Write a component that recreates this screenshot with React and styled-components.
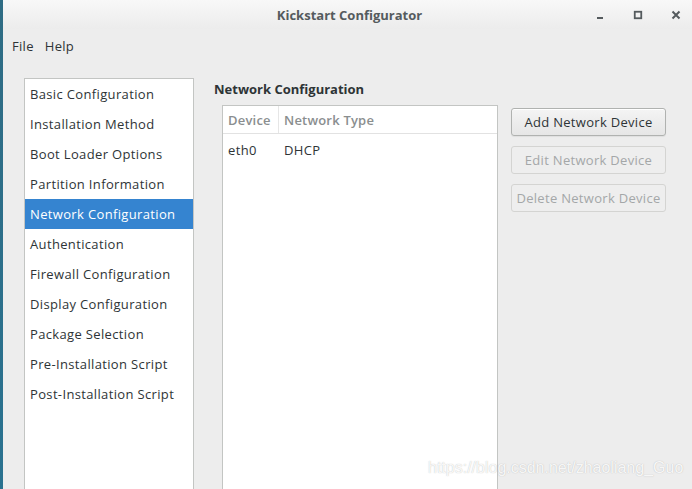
import React, { useState } from 'react';
import styled, { createGlobalStyle } from 'styled-components';

const GlobalStyle = createGlobalStyle`
  html, body {
    margin: 0;
    padding: 0;
    width: 692px;
    height: 489px;
    overflow: hidden;
    background: #ededed;
  }
  body {
    font-family: "Open Sans", "Noto Sans", "DejaVu Sans", sans-serif;
    color: #2e3436;
  }
`;

const Desktop = styled.div`
  display: flex;
  width: 692px;
  height: 489px;
  position: relative;
  overflow: hidden;
`;

const DesktopEdge = styled.div`
  width: 3px;
  flex-shrink: 0;
  background: linear-gradient(#2f6c84, #2a7290);
`;

const Window = styled.div`
  flex: 1;
  display: flex;
  flex-direction: column;
  background: #ededed;
  min-width: 0;
`;

const TitleBar = styled.div`
  height: 29px;
  flex-shrink: 0;
  display: flex;
  align-items: center;
  position: relative;
  background: linear-gradient(#f8f8f8, #ececec);
`;

const Title = styled.div`
  flex: 1;
  text-align: center;
  font-size: 13px;
  font-weight: 700;
  color: #555b5e;
  padding-left: 4px;
`;

const WindowControls = styled.div`
  position: absolute;
  right: -3px;
  top: 0;
  height: 29px;
  display: flex;
  align-items: center;
`;

const ControlButton = styled.div`
  width: 38px;
  height: 29px;
  display: flex;
  align-items: center;
  justify-content: center;
  color: #555b5e;
`;

const MenuBar = styled.div`
  height: 33px;
  display: flex;
  align-items: center;
  padding-left: 8px;
  flex-shrink: 0;
`;

const MenuItem = styled.span`
  font-size: 13px;
  letter-spacing: 0.3px;
  padding: 0 10px 0 1px;
  color: #2e3436;
`;

const Body = styled.div`
  flex: 1;
  display: flex;
  padding: 16px 0 0 21px;
  gap: 20px;
  min-height: 0;
`;

const SideList = styled.ul`
  list-style: none;
  margin: 0;
  padding: 0;
  width: 168px;
  flex-shrink: 0;
  background: #fff;
  border: 1px solid #c3c5c3;
  border-bottom: none;
`;

const SideItem = styled.li`
  height: 30px;
  display: flex;
  align-items: center;
  padding-left: 5px;
  font-size: 13px;
  letter-spacing: 0.35px;
  background: ${p => (p.$active ? '#3584d0' : 'transparent')};
  color: ${p => (p.$active ? '#fff' : '#2e3436')};
  cursor: default;
  white-space: nowrap;
`;

const Panel = styled.div`
  display: flex;
  flex-direction: column;
  width: 460px;
`;

const PanelHeading = styled.div`
  font-size: 13px;
  font-weight: 700;
  margin: 3px 0 7px 0;
  height: 17px;
  line-height: 17px;
`;

const PanelRow = styled.div`
  flex: 1;
  display: flex;
  gap: 13px;
  padding-left: 8px;
  min-height: 0;
`;

const Table = styled.div`
  width: 274px;
  background: #fff;
  border: 1px solid #c3c5c3;
  border-bottom: none;
  display: flex;
  flex-direction: column;
`;

const HeaderRow = styled.div`
  display: flex;
  height: 27px;
  border-bottom: 1px solid #e2e2e2;
`;

const HeaderCell = styled.div`
  width: ${p => p.$w || 'auto'};
  flex: ${p => (p.$w ? 'none' : 1)};
  display: flex;
  align-items: center;
  padding-left: 5px;
  font-size: 13px;
  font-weight: 600;
  letter-spacing: 0.2px;
  color: #8a8e8f;
  border-right: ${p => (p.$divider ? '1px solid #e6e6e6' : 'none')};
  box-sizing: border-box;
`;

const DataRow = styled.div`
  display: flex;
  height: 32px;
`;

const DataCell = styled.div`
  width: ${p => p.$w || 'auto'};
  flex: ${p => (p.$w ? 'none' : 1)};
  display: flex;
  align-items: center;
  padding-left: 5px;
  font-size: 13px;
  letter-spacing: 0.35px;
  color: #2e3436;
  box-sizing: border-box;
`;

const ButtonColumn = styled.div`
  display: flex;
  flex-direction: column;
  gap: 10px;
  padding-top: 3px;
`;

const Button = styled.button`
  flex: none;
  width: 155px;
  height: 28px;
  box-sizing: border-box;
  font-family: inherit;
  font-size: 13px;
  letter-spacing: 0.3px;
  border-radius: 3px;
  padding: 0;
  border: 1px solid ${p => (p.disabled ? '#d4d4d2' : '#b0b2b0')};
  background: ${p => (p.disabled ? '#eeeeee' : 'linear-gradient(#f4f4f4, #e6e6e6)')};
  color: ${p => (p.disabled ? '#a4a7a8' : '#2e3436')};
  box-shadow: ${p => (p.disabled ? 'none' : 'inset 0 1px 0 #fff, 0 1px 1px rgba(0,0,0,0.06)')};
`;

const Watermark = styled.div`
  position: absolute;
  left: 428px;
  top: 459px;
  font-family: "Liberation Sans", Arial, sans-serif;
  font-size: 16px;
  color: rgba(255, 255, 255, 0.9);
  text-shadow: 0 0 1px rgba(130, 130, 130, 0.55);
  pointer-events: none;
`;

const items = [
  'Basic Configuration',
  'Installation Method',
  'Boot Loader Options',
  'Partition Information',
  'Network Configuration',
  'Authentication',
  'Firewall Configuration',
  'Display Configuration',
  'Package Selection',
  'Pre-Installation Script',
  'Post-Installation Script',
];

const devices = [{ name: 'eth0', type: 'DHCP' }];

export default function App() {
  const [active, setActive] = useState(4);
  return (
    <Desktop>
      <GlobalStyle />
      <DesktopEdge />
      <Window>
        <TitleBar>
          <Title>Kickstart Configurator</Title>
          <WindowControls>
            <ControlButton>
              <svg width="10" height="10" viewBox="0 0 10 10">
                <rect x="2" y="7" width="6" height="2" fill="currentColor" />
              </svg>
            </ControlButton>
            <ControlButton>
              <svg width="10" height="10" viewBox="0 0 10 10">
                <rect x="1.75" y="1.75" width="6.5" height="6.5" fill="none" stroke="currentColor" strokeWidth="1.8" />
              </svg>
            </ControlButton>
            <ControlButton>
              <svg width="10" height="10" viewBox="0 0 10 10">
                <path d="M1.5 1.5 L8.5 8.5 M8.5 1.5 L1.5 8.5" stroke="currentColor" strokeWidth="2" />
              </svg>
            </ControlButton>
          </WindowControls>
        </TitleBar>
        <MenuBar>
          <MenuItem>File</MenuItem>
          <MenuItem>Help</MenuItem>
        </MenuBar>
        <Body>
          <SideList>
            {items.map((it, i) => (
              <SideItem key={it} $active={i === active} onClick={() => setActive(i)}>
                {it}
              </SideItem>
            ))}
          </SideList>
          <Panel>
            <PanelHeading>Network Configuration</PanelHeading>
            <PanelRow>
              <Table>
                <HeaderRow>
                  <HeaderCell $w="56px" $divider>Device</HeaderCell>
                  <HeaderCell>Network Type</HeaderCell>
                </HeaderRow>
                {devices.map(d => (
                  <DataRow key={d.name}>
                    <DataCell $w="56px">{d.name}</DataCell>
                    <DataCell>{d.type}</DataCell>
                  </DataRow>
                ))}
              </Table>
              <ButtonColumn>
                <Button>Add Network Device</Button>
                <Button disabled>Edit Network Device</Button>
                <Button disabled>Delete Network Device</Button>
              </ButtonColumn>
            </PanelRow>
          </Panel>
        </Body>
      </Window>
      <Watermark>https://blog.csdn.net/zhaoliang_Guo</Watermark>
    </Desktop>
  );
}
